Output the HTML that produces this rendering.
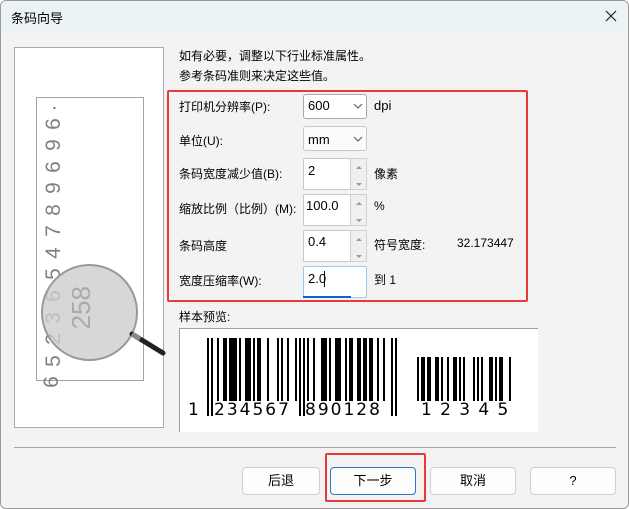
<!DOCTYPE html>
<html><head><meta charset="utf-8"><style>
body{margin:0;width:629px;height:509px;overflow:hidden;background:#fff;font-family:"Liberation Sans","Noto Sans CJK SC",sans-serif;font-size:12px;color:#000}
.win{position:absolute;left:0;top:0;width:627px;height:507px;background:#f3f3f3;border:1px solid #9a9a9a;border-radius:6px;overflow:hidden}
.title{position:absolute;left:0;top:0;width:100%;height:30px;background:#ebf3f7}
.abs{position:absolute}
.lbl{position:absolute;white-space:nowrap}
.box{position:absolute;background:#fff;border:1px solid #c8c8c8;border-radius:3px;box-sizing:border-box}
.sel{border-color:#a8a8a8}
.spin{position:absolute;border:1px solid #d0d0d0;background:#f0f0f0;box-sizing:border-box}
.btn{position:absolute;top:466px;height:28px;background:#fdfdfd;border:1px solid #d0d0d0;border-radius:4px;box-sizing:border-box;text-align:center;line-height:26px;font-size:13px}
.d{position:absolute;left:43px;width:20px;height:20px;line-height:20px;text-align:center;font-size:21px;color:#808080;transform:rotate(-90deg)}
</style></head><body><div class="win">
<div class="title"></div>
<div class="lbl" style="left:10px;top:7px;font-size:13px">条码向导</div>
<svg class="abs" style="left:604px;top:9px" width="12" height="12"><path d="M1 1L11 11M11 1L1 11" stroke="#222" stroke-width="1.2"/></svg>

<div class="abs" style="left:13px;top:46px;width:150px;height:381px;background:#fff;border:1px solid #a9a9a9;box-sizing:border-box"></div>
<div class="abs" style="left:35px;top:96px;width:108px;height:284px;border:1px solid #a5a5a5;box-sizing:border-box"></div>
<div class="d" style="top:97px">·</div>
<div class="d" style="top:113px">6</div>
<div class="d" style="top:134px">9</div>
<div class="d" style="top:156px">6</div>
<div class="d" style="top:177px">9</div>
<div class="d" style="top:199px">8</div>
<div class="d" style="top:220px">7</div>
<div class="d" style="top:242px">4</div>
<div class="d" style="top:263px">5</div>
<div class="d" style="top:285px">6</div>
<div class="d" style="top:307px">3</div>
<div class="d" style="top:328px">2</div>
<div class="d" style="top:350px">5</div>
<div class="d" style="top:371px;left:41px">6</div>
<div class="abs" style="left:40px;top:263px;width:97px;height:97px;border-radius:50%;background:rgba(205,205,205,.8);border:2px solid #999;box-sizing:border-box"></div>
<div class="abs" style="left:65px;top:285px;color:#aaa;font-size:26px;writing-mode:vertical-rl;transform:rotate(180deg)">258</div>
<svg class="abs" style="left:128px;top:330px" width="40" height="30"><path d="M3 3L34 22" stroke="#222" stroke-width="5" stroke-linecap="round"/><path d="M3 3L11 8" stroke="#888" stroke-width="5"/></svg>

<div class="lbl" style="left:178px;top:46px">如有必要，调整以下行业标准属性。</div>
<div class="lbl" style="left:178px;top:66px">参考条码准则来决定这些值。</div>

<div class="abs" style="left:166px;top:89px;width:361px;height:212px;border:2px solid #e83a3a;border-radius:2px;box-sizing:border-box"></div>

<div class="lbl" style="left:178px;top:97px">打印机分辨率(P):</div>
<div class="box sel" style="left:302px;top:93px;width:64px;height:25px"></div>
<div class="lbl" style="left:307px;top:97px;font-size:13px">600</div>
<svg class="abs" style="left:352px;top:102px" width="10" height="6"><path d="M1 1L5 5L9 1" stroke="#555" fill="none"/></svg>
<div class="lbl" style="left:373px;top:97px;font-size:13px">dpi</div>

<div class="lbl" style="left:178px;top:131px">单位(U):</div>
<div class="box" style="left:302px;top:125px;width:64px;height:25px;background:#fbfbfb"></div>
<div class="lbl" style="left:307px;top:131px;font-size:13px">mm</div>
<svg class="abs" style="left:352px;top:135px" width="10" height="6"><path d="M1 1L5 5L9 1" stroke="#555" fill="none"/></svg>

<div class="lbl" style="left:178px;top:164px">条码宽度减少值(B):</div>
<div class="box" style="left:302px;top:157px;width:48px;height:32px;border-radius:2px"></div>
<div class="spin" style="left:349px;top:157px;width:17px;height:32px"></div>
<div class="lbl" style="left:307px;top:162px;font-size:13px">2</div>
<div class="lbl" style="left:373px;top:164px">像素</div>

<div class="lbl" style="left:178px;top:199px">缩放比例（比例）(M):</div>
<div class="box" style="left:302px;top:193px;width:48px;height:32px;border-radius:2px"></div>
<div class="spin" style="left:349px;top:193px;width:17px;height:32px"></div>
<div class="lbl" style="left:305px;top:197px;font-size:13px">100.0</div>
<div class="lbl" style="left:373px;top:198px">%</div>

<div class="lbl" style="left:178px;top:236px">条码高度</div>
<div class="box" style="left:302px;top:229px;width:48px;height:32px;border-radius:2px"></div>
<div class="spin" style="left:349px;top:229px;width:17px;height:32px"></div>
<div class="lbl" style="left:307px;top:233px;font-size:13px">0.4</div>
<div class="lbl" style="left:373px;top:235px">符号宽度:</div>
<div class="lbl" style="left:456px;top:235px">32.173447</div>

<div class="lbl" style="left:178px;top:271px">宽度压缩率(W):</div>
<div class="box" style="left:302px;top:265px;width:64px;height:32px;border:1px solid #9cc8ee;border-radius:2px"></div>
<div class="abs" style="left:302px;top:295px;width:48px;height:2px;background:#0a64c0"></div>
<div class="lbl" style="left:307px;top:270px;font-size:13px">2.0</div>
<div class="abs" style="left:323px;top:270px;width:1px;height:16px;background:#000"></div>
<div class="lbl" style="left:373px;top:270px">到 1</div>

<svg class="abs" style="left:353px;top:160px" width="10" height="130" fill="#999"><path d="M2 8L5 5L8 8Z M2 22L5 25L8 22Z M2 44L5 41L8 44Z M2 58L5 61L8 58Z M2 80L5 77L8 80Z M2 94L5 97L8 94Z"/></svg>

<div class="lbl" style="left:178px;top:307px">样本预览:</div>
<div class="abs" style="left:178px;top:327px;width:359px;height:104px;background:#fff;border-left:1px solid #a0a0a0;border-top:1px solid #a0a0a0;box-sizing:border-box"></div>
<svg class="abs" style="left:206px;top:337px" width="190" height="80" viewBox="0 0 95 80" preserveAspectRatio="none" fill="#000">
<rect x="0" width="1" height="78"/><rect x="2" width="1" height="78"/>
<rect x="5" width="1" height="63"/><rect x="8" width="2" height="63"/>
<rect x="11" width="4" height="63"/><rect x="16" width="1" height="63"/>
<rect x="19" width="3" height="63"/><rect x="23" width="1" height="63"/>
<rect x="25" width="2" height="63"/><rect x="30" width="1" height="63"/>
<rect x="35" width="1" height="63"/><rect x="37" width="1" height="63"/>
<rect x="40" width="1" height="63"/><rect x="44" width="1" height="63"/>
<rect x="46" width="1" height="78"/><rect x="48" width="1" height="78"/>
<rect x="50" width="1" height="63"/><rect x="53" width="1" height="63"/>
<rect x="57" width="3" height="63"/><rect x="61" width="1" height="63"/>
<rect x="64" width="3" height="63"/><rect x="69" width="1" height="63"/>
<rect x="71" width="2" height="63"/><rect x="75" width="2" height="63"/>
<rect x="78" width="2" height="63"/><rect x="81" width="2" height="63"/>
<rect x="85" width="1" height="63"/><rect x="88" width="1" height="63"/>
<rect x="92" width="1" height="78"/><rect x="94" width="1" height="78"/>
</svg>
<svg class="abs" style="left:416px;top:356px" width="94" height="44" viewBox="0 0 47 44" preserveAspectRatio="none" fill="#000">
<rect x="0" width="1" height="44"/><rect x="2" width="2" height="44"/>
<rect x="5" width="2" height="44"/><rect x="9" width="2" height="44"/>
<rect x="12" width="1" height="44"/><rect x="15" width="1" height="44"/>
<rect x="18" width="2" height="44"/><rect x="21" width="1" height="44"/>
<rect x="23" width="1" height="44"/><rect x="28" width="1" height="44"/>
<rect x="30" width="1" height="44"/><rect x="32" width="1" height="44"/>
<rect x="36" width="2" height="44"/><rect x="39" width="1" height="44"/>
<rect x="41" width="2" height="44"/><rect x="46" width="1" height="44"/>
</svg>
<div class="lbl" style="left:187px;top:399px;font-size:17px;font-family:'DejaVu Sans',sans-serif">1</div>
<div class="lbl" style="left:213px;top:399px;font-size:17px;font-family:'DejaVu Sans',sans-serif;letter-spacing:2px">234567</div>
<div class="lbl" style="left:304px;top:399px;font-size:17px;font-family:'DejaVu Sans',sans-serif;letter-spacing:2px">890128</div>
<div class="lbl" style="left:420px;top:399px;font-size:17px;font-family:'DejaVu Sans',sans-serif;letter-spacing:8.3px">12345</div>

<div class="abs" style="left:13px;top:446px;width:602px;height:1px;background:#a8a8a8"></div>
<div class="btn" style="left:241px;width:78px">后退</div>
<div class="btn" style="left:329px;width:86px;border-color:#2b78c8">下一步</div>
<div class="btn" style="left:429px;width:86px">取消</div>
<div class="btn" style="left:529px;width:86px">?</div>
<div class="abs" style="left:324px;top:452px;width:101px;height:49px;border:2px solid #e83a3a;border-radius:2px;box-sizing:border-box"></div>
</div></body></html>
